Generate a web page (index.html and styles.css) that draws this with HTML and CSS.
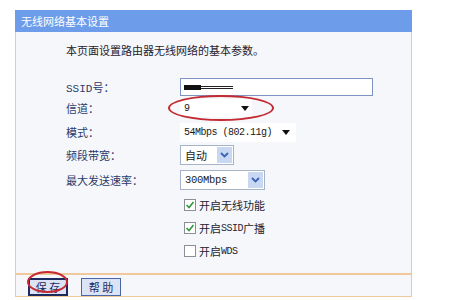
FILE: index.html
```html
<!DOCTYPE html>
<html lang="zh">
<head>
<meta charset="utf-8">
<link rel="stylesheet" href="styles.css">
</head>
<body>
<div class="panel">
  <div class="head">无线网络基本设置</div>
  <div class="body">
    <div class="intro">本页面设置路由器无线网络的基本参数。</div>
    <div class="row r-ssid">
      <div class="label"><span class="mono">SSID</span>号：</div>
      <div class="input"><span class="redact"></span><span class="redact2"></span></div>
    </div>
    <div class="row r-chan">
      <div class="label">信道：</div>
      <div class="plain sel-chan"><span class="mono">9</span><span class="tri"></span></div>
    </div>
    <div class="row r-mode">
      <div class="label">模式：</div>
      <div class="plain sel-mode"><span class="mono">54Mbps (802.11g)</span><span class="tri"></span></div>
    </div>
    <div class="row r-band">
      <div class="label">频段带宽：</div>
      <div class="box sel-band"><span class="val">自动</span><span class="arr"><svg width="9" height="6" viewBox="0 0 9 6"><path d="M1 1 L4.5 4.5 L8 1" fill="none" stroke="#3a62b8" stroke-width="1.8"/></svg></span></div>
    </div>
    <div class="row r-rate">
      <div class="label">最大发送速率：</div>
      <div class="box sel-rate"><span class="val mono">300Mbps</span><span class="arr"><svg width="9" height="6" viewBox="0 0 9 6"><path d="M1 1 L4.5 4.5 L8 1" fill="none" stroke="#3a62b8" stroke-width="1.8"/></svg></span></div>
    </div>
    <div class="row r-c1">
      <div class="label"></div>
      <div class="chk"><span class="cb"><svg width="10" height="10" viewBox="0 0 10 10"><path d="M1.5 5 L4 7.5 L8.5 2" fill="none" stroke="#2f9a3a" stroke-width="1.6"/></svg></span>开启无线功能</div>
    </div>
    <div class="row r-c2">
      <div class="label"></div>
      <div class="chk"><span class="cb"><svg width="10" height="10" viewBox="0 0 10 10"><path d="M1.5 5 L4 7.5 L8.5 2" fill="none" stroke="#2f9a3a" stroke-width="1.6"/></svg></span>开启<span class="mono">SSID</span>广播</div>
    </div>
    <div class="row r-c3">
      <div class="label"></div>
      <div class="chk"><span class="cb"></span>开启<span class="mono">WDS</span></div>
    </div>
    <div class="foot">
      <div class="btn btn-save">保 存</div>
      <div class="btn btn-help">帮 助</div>
    </div>
  </div>
</div>
<div class="ring ring-chan"></div>
<div class="ring ring-save"></div>
</body>
</html>
```

FILE: styles.css
```css
html, body {
  margin: 0;
  padding: 0;
  background: #ffffff;
  width: 450px;
  height: 300px;
  overflow: hidden;
  font-family: "Noto Sans CJK SC", "Liberation Sans", sans-serif;
  font-size: 11px;
}
.panel {
  margin: 10px 0 0 15px;
  width: 397px;
}
.head {
  height: 22px;
  line-height: 22px;
  background: #6c9cea;
  color: #ffffff;
  padding-left: 6px;
  font-size: 11px;
}
.body {
  background: #f6f7fa;
  border-left: 1px solid #f1c79c;
  border-right: 1px solid #f1c79c;
  border-bottom: 1px solid #f1c79c;
  height: 265px;
  padding-left: 50px;
  box-sizing: border-box;
  padding-top: 10px;
}
.intro {
  height: 16px;
  line-height: 16px;
  color: #1f2230;
}
.mono {
  font-family: "Liberation Mono", "DejaVu Sans Mono", monospace;
}
.row {
  display: flex;
  align-items: center;
}
.label {
  width: 114px;
  color: #2a3a6c;
  flex: none;
}
.r-ssid { margin-top: 20px; height: 18px; }
.r-chan { margin-top: 2px; height: 20px; }
.r-mode { margin-top: 4px; height: 20px; }
.r-band { margin-top: 3px; height: 20px; }
.r-rate { margin-top: 5px; height: 20px; }
.r-c1 { margin-top: 6px; height: 18px; }
.r-c2 { margin-top: 5px; height: 18px; }
.r-c3 { margin-top: 5px; height: 18px; }
.input {
  width: 193px;
  height: 18px;
  box-sizing: border-box;
  border: 1px solid #7e95c4;
  background: #ffffff;
  display: flex;
  align-items: center;
  padding-left: 3px;
}
.redact {
  width: 17px;
  height: 5px;
  background: #111;
}
.redact2 {
  width: 32px;
  height: 3px;
  border-top: 1px solid #222;
  border-bottom: 1px solid #222;
  box-sizing: border-box;
}
.plain {
  background: #ffffff;
  height: 18px;
  display: flex;
  align-items: center;
  padding-left: 4px;
  box-sizing: border-box;
  color: #1a1a1a;
}
.plain .mono {
  font-size: 10px;
  letter-spacing: -0.5px;
}
.sel-chan { width: 72px; }
.sel-chan .mono { width: 57px; }
.sel-mode { width: 116px; height: 19px; }
.sel-mode .mono { width: 98px; }
.tri {
  width: 0;
  height: 0;
  border-left: 4.5px solid transparent;
  border-right: 4.5px solid transparent;
  border-top: 5px solid #111;
}
.box {
  height: 20px;
  box-sizing: border-box;
  border: 1px solid #a6b3c9;
  background: #ffffff;
  display: flex;
  align-items: center;
  justify-content: space-between;
  padding: 1px;
  color: #1a1a1a;
}
.box .val {
  padding-left: 3px;
}
.box .mono {
  font-size: 10.5px;
  letter-spacing: -0.3px;
}
.arr {
  width: 15px;
  height: 16px;
  background: #c9d8f2;
  display: flex;
  align-items: center;
  justify-content: center;
}
.sel-band { width: 54px; }
.sel-rate { width: 85px; }
.chk {
  display: flex;
  align-items: center;
  margin-left: 4px;
  color: #1f2230;
}
.chk .mono {
  font-size: 10px;
  letter-spacing: -0.5px;
}
.cb {
  width: 12px;
  height: 12px;
  box-sizing: border-box;
  border: 1px solid #8a8f98;
  background: #ffffff;
  margin-right: 3px;
  display: flex;
  align-items: center;
  justify-content: center;
}
.foot {
  margin-top: 13px;
  margin-left: -50px;
  border-top: 2px solid #f1c79c;
  display: flex;
  padding-top: 3px;
  padding-left: 12px;
  gap: 13px;
}
.btn {
  width: 40px;
  height: 18px;
  box-sizing: border-box;
  display: flex;
  align-items: center;
  justify-content: center;
  color: #1c2a5c;
  font-size: 11px;
  background: #dde3f6;
}
.btn-save {
  border: 2px solid #1d2a5e;
}
.btn-help {
  border: 1px solid #4966a6;
}
.ring {
  position: absolute;
  border: 2px solid #c42a31;
  border-radius: 50%;
  box-sizing: border-box;
}
.ring-chan {
  left: 168px;
  top: 95px;
  width: 106px;
  height: 26px;
}
.ring-save {
  left: 27px;
  top: 271px;
  width: 41px;
  height: 22px;
}
```
